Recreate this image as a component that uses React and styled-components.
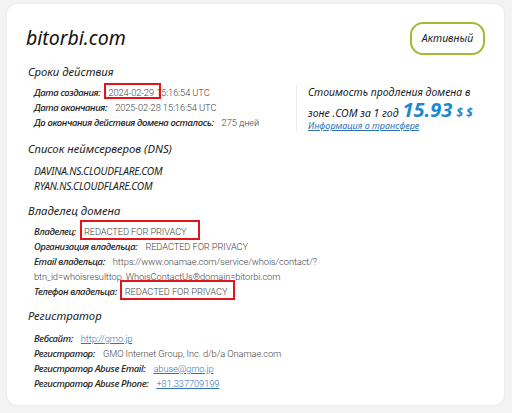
import React from 'react';
import styled, { createGlobalStyle } from 'styled-components';

const Global = createGlobalStyle`
  html, body { margin: 0; padding: 0; background: #f3f3f3; }
  body { font-family: "Noto Sans", sans-serif; }
`;

const Page = styled.div`
  padding: 4px 8px 8px 7px;
`;

const Card = styled.div`
  background: #fff;
  border-radius: 10px;
  box-shadow: 0 0 3px rgba(0, 0, 0, 0.07);
  height: 401px;
  box-sizing: border-box;
  padding: 17px 19px 0 19px;
`;

const Header = styled.div`
  display: flex;
  align-items: center;
  justify-content: space-between;
`;

const Title = styled.h1`
  margin: 0;
  font-family: "Noto Sans", sans-serif;
  font-style: italic;
  font-weight: 400;
  font-size: 19.5px;
  line-height: 34px;
  color: #111;
`;

const Badge = styled.div`
  box-sizing: border-box;
  width: 75px;
  height: 33px;
  border: 2px solid #9dbd2e;
  border-radius: 13px;
  display: flex;
  align-items: center;
  justify-content: center;
  font-style: italic;
  font-size: 10.5px;
  color: #222;
`;

const Section = styled.section`
  margin-top: ${p => p.$top}px;
  padding-left: 2px;
`;

const Heading = styled.h2`
  margin: 0 0 4px 0;
  font-style: italic;
  font-weight: 400;
  font-size: 11.3px;
  line-height: 18px;
  height: 18px;
  color: #222;
`;

const Split = styled.div`
  display: flex;
  align-items: flex-start;
`;

const Rows = styled.div`
  width: 262px;
  padding-left: 6px;
  padding-top: ${p => p.$top || 0}px;
`;

const Row = styled.div`
  font-size: 10px;
  line-height: 15px;
  white-space: nowrap;
`;

const Label = styled.span`
  font-family: "Noto Sans", sans-serif;
  font-style: italic;
  font-weight: 500;
  font-size: 9.5px;
  line-height: 1;
  color: #1a1a1a;
  margin-right: 8px;
  letter-spacing: -0.35px;
`;

const Value = styled.span`
  font-family: Roboto, sans-serif;
  font-weight: 300;
  font-size: 9.3px;
  line-height: 1;
  letter-spacing: -0.1px;
  color: #444;
`;

const Link = styled.a`
  font-family: Roboto, sans-serif;
  font-weight: 300;
  font-size: 9.3px;
  line-height: 1;
  letter-spacing: -0.1px;
  color: #2f74b5;
  text-decoration: underline;
`;

const Servers = styled.div`
  padding: 2px 0 0 6px;
`;

const Server = styled.div`
  font-style: italic;
  font-size: 10.2px;
  line-height: 14.5px;
  height: 14.5px;
  color: #222;
  letter-spacing: -0.2px;
`;

const Mark = styled.span`
  position: relative;
  &::after {
    content: "";
    position: absolute;
    left: -${p => p.$l}px;
    top: ${p => p.$t}px;
    width: ${p => p.$w}px;
    height: ${p => p.$h}px;
    border: 2px solid #e3141c;
    box-sizing: border-box;
    pointer-events: none;
  }
`;

const Price = styled.div`
  border-left: 1px solid #ececec;
  padding-left: 11px;
  font-style: italic;
  color: #1a1a1a;
`;

const PriceLine = styled.div`
  font-size: 10.5px;
  line-height: ${p => p.$lh}px;
  height: ${p => p.$lh}px;
  white-space: nowrap;
`;

const Amount = styled.span`
  font-weight: 700;
  font-size: 20px;
  line-height: 1;
  color: #1b8ad0;
  margin-left: 4px;
`;

const Currency = styled.span`
  font-weight: 700;
  font-size: 12px;
  line-height: 1;
  color: #1b8ad0;
  margin-left: 4px;
`;

const TransferLink = styled.a`
  font-size: 9px;
  color: #2f74b5;
  text-decoration: underline;
`;

export default function App() {
  return (
    <>
      <Global />
      <Page>
        <Card>
          <Header>
            <Title>bitorbi.com</Title>
            <Badge>Активный</Badge>
          </Header>

          <Section $top={8}>
            <Heading>Сроки действия</Heading>
            <Split>
              <Rows>
                <Row>
                  <Label>Дата создания:</Label>
                  <Value>
                    <Mark $l={4} $t={-4} $w={57} $h={16}>2024-02-29</Mark> 15:16:54 UTC
                  </Value>
                </Row>
                <Row>
                  <Label>Дата окончания:</Label>
                  <Value>2025-02-28 15:16:54 UTC</Value>
                </Row>
                <Row>
                  <Label>До окончания действия домена осталось:</Label>
                  <Value>275 дней</Value>
                </Row>
              </Rows>
              <Price>
                <PriceLine $lh={15}>Стоимость продления домена в</PriceLine>
                <PriceLine $lh={19}>
                  зоне .COM за 1 год<Amount>15.93</Amount><Currency>$ $</Currency>
                </PriceLine>
                <PriceLine $lh={13}>
                  <TransferLink href="#">Информация о трансфере</TransferLink>
                </PriceLine>
              </Price>
            </Split>
          </Section>

          <Section $top={8}>
            <Heading>Список неймсерверов (DNS)</Heading>
            <Servers>
              <Server>DAVINA.NS.CLOUDFLARE.COM</Server>
              <Server>RYAN.NS.CLOUDFLARE.COM</Server>
            </Servers>
          </Section>

          <Section $top={9}>
            <Heading>Владелец домена</Heading>
            <Rows>
              <Row>
                <Label>Владелец:</Label>
                <Value>
                  <Mark $l={4} $t={-6} $w={120} $h={20}>REDACTED FOR PRIVACY</Mark>
                </Value>
              </Row>
              <Row>
                <Label>Организация владельца:</Label>
                <Value>REDACTED FOR PRIVACY</Value>
              </Row>
              <Row>
                <Label>Email владельца:</Label>
                <Value>
                  https://www.onamae.com/service/whois/contact/?
                  <br />
                  btn_id=whoisresulttop_WhoisContactUs®domain=bitorbi.com
                </Value>
              </Row>
              <Row>
                <Label>Телефон владельца:</Label>
                <Value>
                  <Mark $l={5} $t={-6} $w={115} $h={20}>REDACTED FOR PRIVACY</Mark>
                </Value>
              </Row>
            </Rows>
          </Section>

          <Section $top={8}>
            <Heading>Регистратор</Heading>
            <Rows $top={2}>
              <Row>
                <Label>Вебсайт:</Label>
                <Link href="#">http://gmo.jp</Link>
              </Row>
              <Row>
                <Label>Регистратор:</Label>
                <Value>GMO Internet Group, Inc. d/b/a Onamae.com</Value>
              </Row>
              <Row>
                <Label>Регистратор Abuse Email:</Label>
                <Link href="#">abuse@gmo.jp</Link>
              </Row>
              <Row>
                <Label>Регистратор Abuse Phone:</Label>
                <Link href="#">+81.337709199</Link>
              </Row>
            </Rows>
          </Section>
        </Card>
      </Page>
    </>
  );
}
